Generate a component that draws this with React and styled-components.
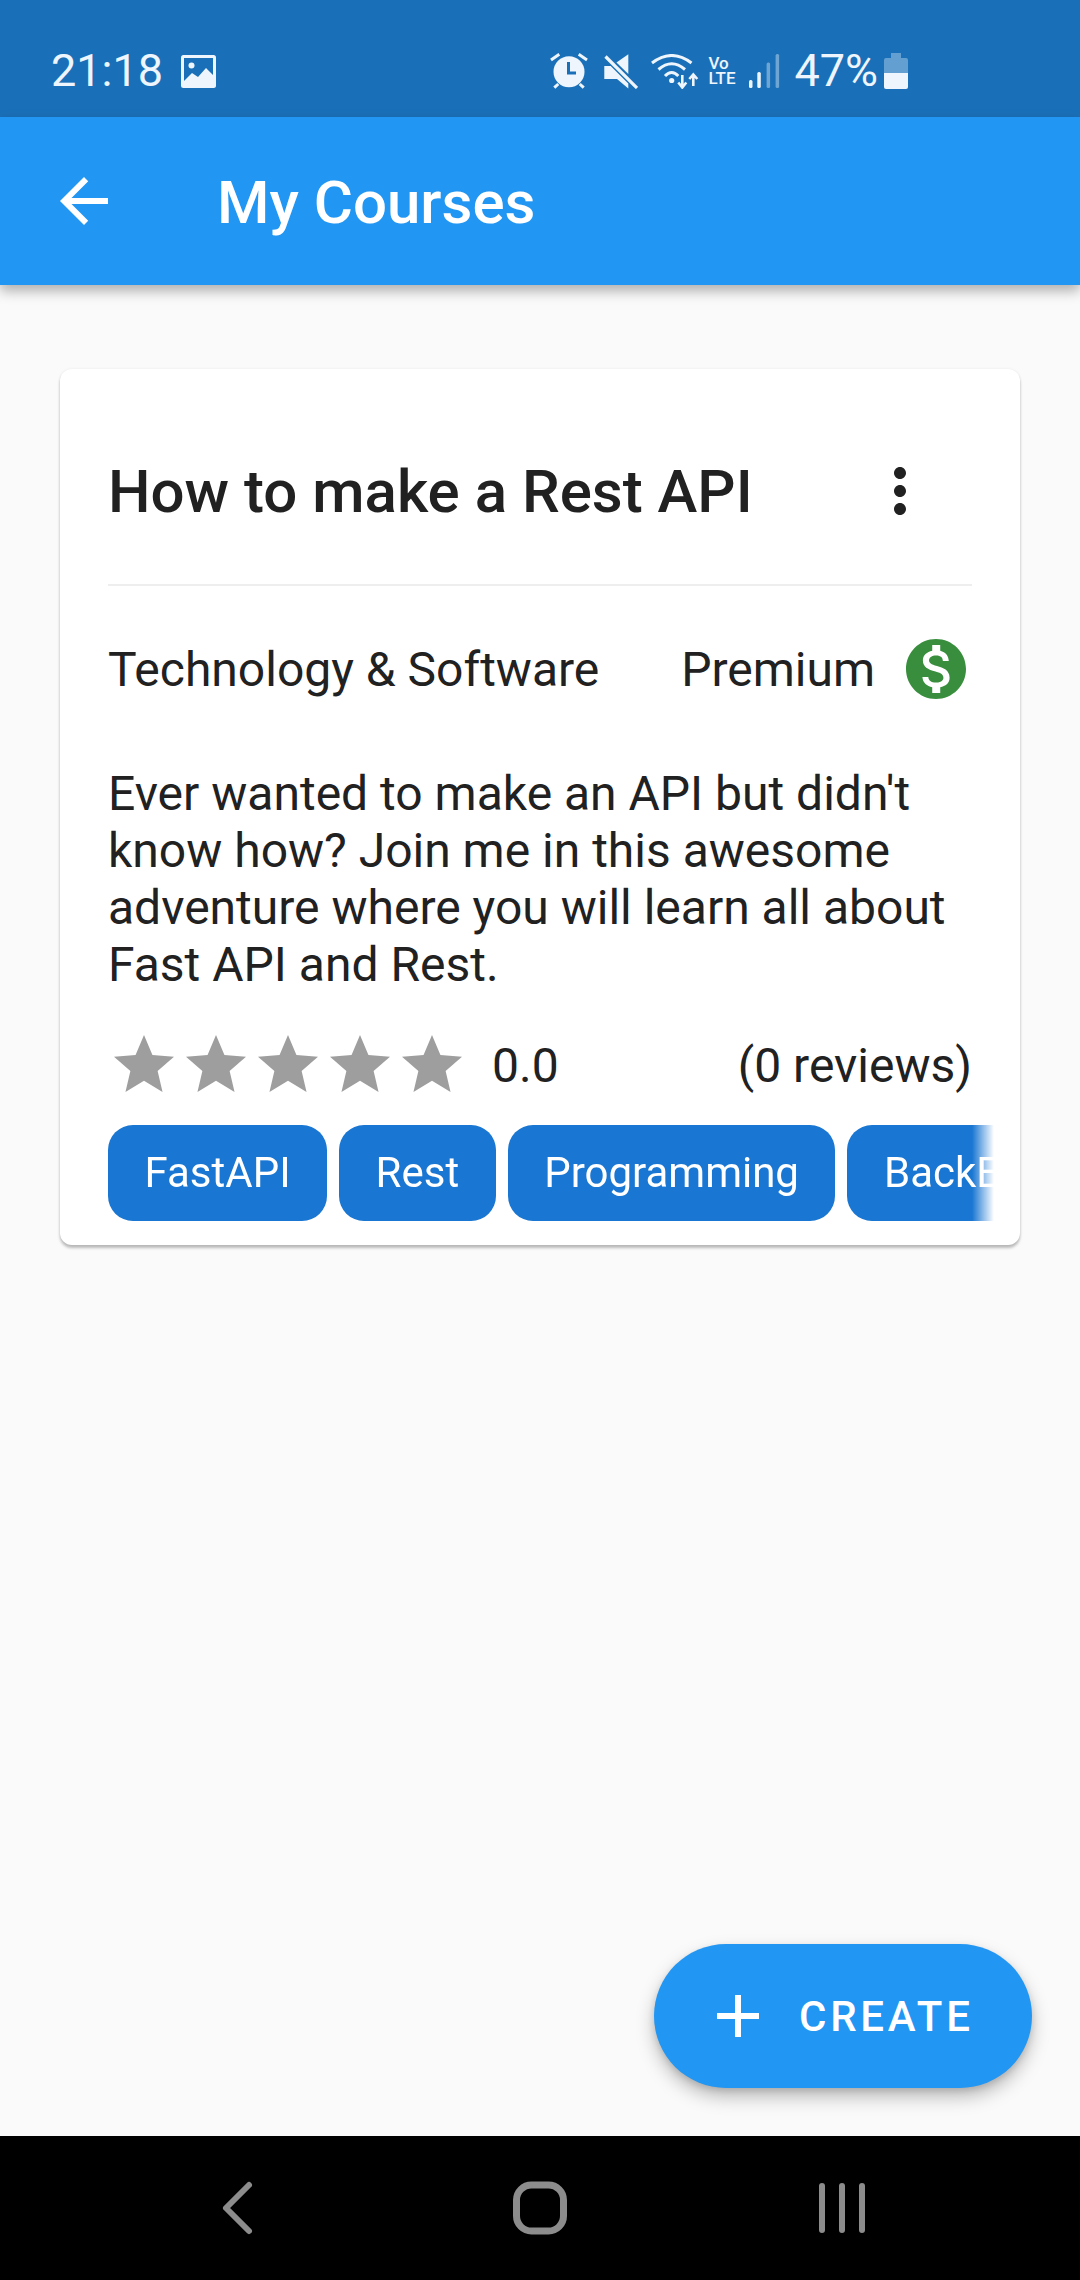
import React from "react";
import styled, { createGlobalStyle } from "styled-components";
import { MdArrowBack, MdMoreVert, MdStar, MdMonetizationOn, MdAdd } from "react-icons/md";

const GlobalStyle = createGlobalStyle`
html, body {
  margin: 0;
  padding: 0;
  background: #fafafa;
}
* { box-sizing: border-box; }
`;

const Page = styled.div`
  width: 1080px;
  height: 2280px;
  display: flex;
  flex-direction: column;
  overflow: hidden;
  font-family: Roboto, "Liberation Sans", sans-serif;
  color: #212121;
`;

const StatusBar = styled.div`
  height: 117px;
  flex: none;
  background: #1a70b8;
  color: #eef5fc;
  display: flex;
  align-items: center;
  justify-content: space-between;
  padding: 25px 172px 0 51px;
`;

const StatusGroup = styled.div`
  display: flex;
  align-items: center;
`;

const StatusText = styled.span`
  font-size: 45px;
  line-height: 52px;
  font-weight: 400;
  margin-left: ${(p) => p.$gap || 0}px;
`;

const StatusIcon = styled.svg`
  display: block;
  flex: none;
  margin-left: ${(p) => p.$gap || 0}px;
`;

const VoLte = styled.div`
  margin-left: 9px;
  font-size: 17px;
  line-height: 15px;
  font-weight: 500;
  width: 28px;
`;

const AppBar = styled.header`
  height: 168px;
  flex: none;
  background: #2196f3;
  color: #fff;
  display: flex;
  align-items: center;
  padding-left: 48px;
  box-shadow: 0 6px 12px rgba(0, 0, 0, 0.3);
  position: relative;
  z-index: 1;
  font-size: 72px;
`;

const AppTitle = styled.h1`
  margin: 3px 0 0 97px;
  font-size: 60px;
  font-weight: 500;
`;

const Main = styled.main`
  flex: 1;
  position: relative;
  padding: 84px 60px 0;
`;

const Card = styled.section`
  background: #fff;
  border-radius: 12px;
  padding: 85px 48px 24px;
  box-shadow: 0 3px 3px rgba(0, 0, 0, 0.25), 0 0 3px rgba(0, 0, 0, 0.07);
`;

const CardHeader = styled.div`
  display: flex;
  align-items: center;
  justify-content: space-between;
  height: 132px;
  padding-bottom: 56px;
  border-bottom: 2px solid #eee;
  font-size: 72px;
`;

const CardTitle = styled.h2`
  margin: 0;
  font-size: 60px;
  font-weight: 500;
`;

const MoreButton = styled.span`
  display: flex;
  margin-right: 36px;
`;

const MetaRow = styled.div`
  display: flex;
  align-items: center;
  justify-content: space-between;
  height: 72px;
  margin-top: 47px;
  font-size: 48px;
`;

const Premium = styled.div`
  display: flex;
  align-items: center;
  gap: 25px;
`;

const PremiumIcon = styled.span`
  display: flex;
  font-size: 72px;
  color: #388e3c;
`;

const Description = styled.p`
  margin: 60px 0 0;
  font-size: 48px;
  line-height: 57px;
`;

const RatingRow = styled.div`
  display: flex;
  align-items: center;
  height: 72px;
  margin-top: 36px;
  font-size: 48px;
`;

const Stars = styled.div`
  display: flex;
  color: #9e9e9e;
  font-size: 72px;
  margin-right: 24px;
`;

const Reviews = styled.span`
  margin-left: auto;
`;

const TagRow = styled.div`
  display: flex;
  gap: 12px;
  margin: 24px -22px 0 0;
  overflow: hidden;
  -webkit-mask-image: linear-gradient(to right, #000 calc(100% - 22px), transparent);
  mask-image: linear-gradient(to right, #000 calc(100% - 22px), transparent);
`;

const Tag = styled.span`
  flex: none;
  height: 96px;
  line-height: 96px;
  padding: 0 36.5px;
  border-radius: 25px;
  background: #1976d2;
  color: #fff;
  font-size: 42px;
`;

const Fab = styled.button`
  position: absolute;
  right: 48px;
  bottom: 48px;
  width: 378px;
  height: 144px;
  border: 0;
  border-radius: 72px;
  background: #2196f3;
  color: #fff;
  display: flex;
  align-items: center;
  gap: 25px;
  padding: 0 0 0 48px;
  font-family: inherit;
  font-size: 42px;
  font-weight: 500;
  letter-spacing: 3.75px;
  box-shadow: 0 9px 18px rgba(0, 0, 0, 0.25), 0 3px 6px rgba(0, 0, 0, 0.12);
`;

const FabIcon = styled.span`
  display: flex;
  font-size: 72px;
`;

const NavBar = styled.nav`
  height: 144px;
  flex: none;
  background: #000;
  display: flex;
  align-items: center;
  justify-content: center;
  gap: 242px;
`;

const BLUE = "#1a70b8";

const ImageIcon = () => (
  <StatusIcon $gap={18} width="35" height="33" viewBox="0 0 35 33">
    <rect width="35" height="33" rx="2.5" fill="currentColor" />
    <rect x="3" y="3" width="29" height="27" fill={BLUE} />
    <circle cx="10.5" cy="10.5" r="3" fill="currentColor" />
    <path d="M3 26 L11 18 L17 22 L25 13 L32 20 V30 H3 Z" fill="currentColor" />
  </StatusIcon>
);

const AlarmIcon = () => (
  <StatusIcon width="38" height="36" viewBox="0 0 38 36">
    <circle cx="19" cy="18.7" r="15.5" fill="currentColor" />
    <path d="M18.5 9 V20 H26" fill="none" stroke={BLUE} strokeWidth="3" />
    <path d="M1 7 L9.3 1.3 M37 7 L28.7 1.3 M4.3 34.7 L8.3 31 M33.7 34.7 L29.7 31" stroke="currentColor" strokeWidth="3" />
  </StatusIcon>
);

const MuteIcon = () => (
  <StatusIcon $gap={16} width="34" height="35" viewBox="0 0 34 35">
    <path d="M24.3 0.3 V20 L12.5 8.5 Z" fill="currentColor" />
    <path d="M0.3 12 H6.7 L24.3 29.6 V34.5 L13 25 H0.3 Z" fill="currentColor" />
    <path d="M1.5 2.5 L33 34" stroke="currentColor" strokeWidth="3.2" />
  </StatusIcon>
);

const WifiIcon = () => (
  <StatusIcon $gap={13} width="48" height="35" viewBox="0 0 48 35">
    <g fill="none" stroke="currentColor" strokeWidth="3">
      <path d="M1 9 Q20.7 -6 40.5 9" />
      <path d="M7.5 15.5 Q20.7 4 34 15.5" />
      <path d="M14 22 Q20.7 15 27.3 22" />
    </g>
    <circle cx="20.7" cy="26.5" r="2.6" fill="currentColor" />
    <path d="M31.3 21 V33 M27.3 28.5 L31.3 33.5 L35.3 28.5 M42.3 32 V20.5 M38.3 25 L42.3 20.5 L46.3 25" fill="none" stroke="currentColor" strokeWidth="2.6" />
  </StatusIcon>
);

const SignalIcon = () => (
  <StatusIcon $gap={12} width="32" height="34" viewBox="0 0 32 34" fill="currentColor">
    <rect x="1" y="26" width="3.5" height="8" rx="1.5" />
    <rect x="9.3" y="18" width="3.5" height="16" rx="1.5" />
    <rect x="18.6" y="8.5" width="3.5" height="25.5" rx="1.5" opacity="0.4" />
    <rect x="27.6" y="0" width="3.5" height="34" rx="1.5" opacity="0.4" />
  </StatusIcon>
);

const BatteryIcon = () => (
  <StatusIcon $gap={6} width="24" height="36" viewBox="0 0 24 36" fill="currentColor">
    <path d="M7 0 H17 V5 H22 Q24 5 24 7 V20 H0 V7 Q0 5 2 5 H7 Z" opacity="0.35" />
    <path d="M0 20 H24 V34 Q24 36 22 36 H2 Q0 36 0 34 Z" />
  </StatusIcon>
);

const NavBack = () => (
  <svg width="60" height="60" viewBox="0 0 60 60" fill="none" stroke="#8c8c8c" strokeWidth="6" strokeLinecap="round" strokeLinejoin="round">
    <path d="M41 7 L18 30 L41 53" />
  </svg>
);

const NavHome = () => (
  <svg width="60" height="60" viewBox="0 0 60 60" fill="none" stroke="#8c8c8c" strokeWidth="7">
    <rect x="6.5" y="7" width="47" height="46" rx="15" />
  </svg>
);

const NavRecents = () => (
  <svg width="60" height="60" viewBox="0 0 60 60" fill="none" stroke="#8c8c8c" strokeWidth="6" strokeLinecap="round">
    <path d="M10 8 V52 M30 8 V52 M50 8 V52" />
  </svg>
);

const tags = ["FastAPI", "Rest", "Programming", "BackEnd"];

const App = () => {
  return (
    <Page>
      <GlobalStyle />
      <StatusBar>
        <StatusGroup>
          <StatusText>21:18</StatusText>
          <ImageIcon />
        </StatusGroup>
        <StatusGroup>
          <AlarmIcon />
          <MuteIcon />
          <WifiIcon />
          <VoLte>Vo<br />LTE</VoLte>
          <SignalIcon />
          <StatusText $gap={14}>47%</StatusText>
          <BatteryIcon />
        </StatusGroup>
      </StatusBar>
      <AppBar>
        <MdArrowBack />
        <AppTitle>My Courses</AppTitle>
      </AppBar>
      <Main>
        <Card>
          <CardHeader>
            <CardTitle>How to make a Rest API</CardTitle>
            <MoreButton><MdMoreVert /></MoreButton>
          </CardHeader>
          <MetaRow>
            <span>Technology &amp; Software</span>
            <Premium>
              <span>Premium</span>
              <PremiumIcon><MdMonetizationOn /></PremiumIcon>
            </Premium>
          </MetaRow>
          <Description>
            Ever wanted to make an API but didn't know how? Join me in this awesome adventure where you will learn all about Fast API and Rest.
          </Description>
          <RatingRow>
            <Stars>
              {[0, 1, 2, 3, 4].map((i) => <MdStar key={i} />)}
            </Stars>
            <span>0.0</span>
            <Reviews>(0 reviews)</Reviews>
          </RatingRow>
          <TagRow>
            {tags.map((t) => <Tag key={t}>{t}</Tag>)}
          </TagRow>
        </Card>
        <Fab>
          <FabIcon><MdAdd /></FabIcon>
          CREATE
        </Fab>
      </Main>
      <NavBar>
        <NavBack />
        <NavHome />
        <NavRecents />
      </NavBar>
    </Page>
  );
};

export default App;
